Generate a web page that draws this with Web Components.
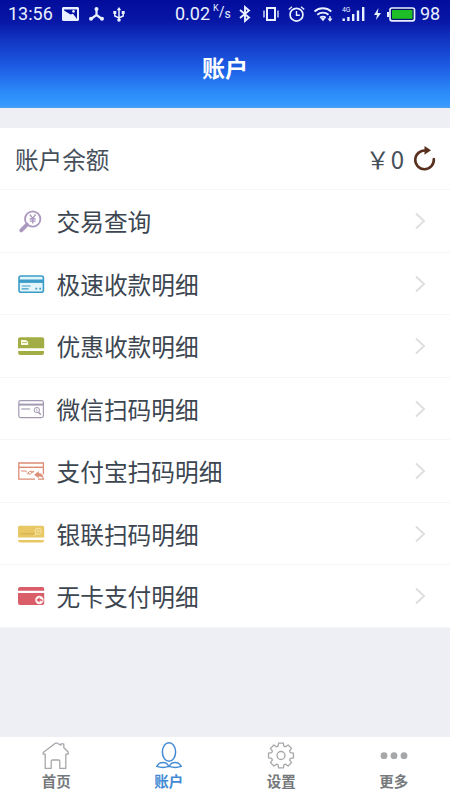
<!DOCTYPE html>
<html lang="zh-CN">
<head>
<meta charset="utf-8">
<title>账户</title>
<style>
html,body{margin:0;height:100%}
body{font-family:Roboto,"Noto Sans CJK SC",sans-serif;background:#edeff4;overflow:hidden}
</style>
</head>
<body>
<account-app></account-app>
<script>
const define = (name, html, setup) => {
  const t = document.createElement('template');
  t.innerHTML = html;
  customElements.define(name, class extends HTMLElement {
    connectedCallback() {
      if (this.shadowRoot) return;
      const root = this.attachShadow({mode: 'open'});
      root.append(t.content.cloneNode(true));
      if (setup) setup(this, root);
    }
  });
};

const icons = {
  search: ['#ab98be', `<circle cx="14.7" cy="10" r="7.7" fill="none" stroke="currentColor" stroke-width="1.8"/><path d="M9 15.6 3.2 21.4" stroke="currentColor" stroke-width="3.8" stroke-linecap="round"/><path d="m11.8 5.5 2.9 4 2.9-4M14.7 9.5v5M11.7 10h6M11.7 12.2h6" stroke="currentColor" stroke-width="1.3" fill="none"/>`],
  blue: ['#3b9cc8', `<rect x="1" y="4" width="24.4" height="16.2" rx="2" fill="#e3f5fb" stroke="currentColor" stroke-width="1.6"/><path d="M1 9.2h24.4" stroke="currentColor" stroke-width="3.4"/><path d="M3.6 14h9M3.6 16.8h7" stroke="currentColor" stroke-width="1.2"/><path d="M17.4 16.6h1.8M21.3 16.6h1.8" stroke="currentColor" stroke-width="1.6"/>`],
  green: ['#a3ad45', `<path d="M2 3.3h22.2a2 2 0 0 1 2 2v9H0v-9a2 2 0 0 1 2-2ZM.2 17h25.8v2a2 2 0 0 1-2 2H2.2a2 2 0 0 1-2-2Z" fill="currentColor"/><path d="M3 6h5l2.2 2v3H3Z" fill="#f8fae4"/><path d="M4 8.5h5" stroke="currentColor" stroke-width=".7"/>`],
  wechat: ['#a59ab3', `<rect x=".8" y="3.6" width="24.6" height="17" rx="1.8" fill="none" stroke="currentColor" stroke-width="1.2"/><path d="M1 7.6h24.4" stroke="currentColor" stroke-width="2"/><path d="M3.2 12h9" stroke="currentColor" stroke-width="1.1"/><circle cx="18.8" cy="13" r="2.7" fill="none" stroke="currentColor"/><path d="m20.5 15.2 2.3 2.5" stroke="currentColor" stroke-width="1.6"/><path d="M18.8 11.3v3.2" stroke="currentColor" stroke-width=".8"/>`],
  alipay: ['#dd8d75', `<path d="M17 20.2H.8V4h24.6v11.2M25.4 19v1.2H20" fill="none" stroke="currentColor" stroke-width="1.3"/><path d="M1 8.3h24.4" stroke="currentColor" stroke-width="1.5"/><path d="M3 12h5l1 1.5M9.5 14.8l2-2.5h3l-2 2.8zM14.5 14l1.5-2" fill="none" stroke="currentColor"/><path d="m16.2 15.7 4.5-3.4v2c3 0 4.8 1.8 4.8 5.6-1.2-2-2.4-2.5-4.8-2.4V19.2Z" fill="currentColor"/>`],
  yellow: ['#e7c864', `<path d="M2 3.8h22.4a1.8 1.8 0 0 1 1.8 1.8v10H0v-10a1.8 1.8 0 0 1 2-1.8ZM.2 18h25.8v.6a2 2 0 0 1-2 2H2.2a2 2 0 0 1-2-2Z" fill="currentColor"/><path d="M2.5 11.8h14" stroke="#d4ae4a"/><circle cx="20.2" cy="9.2" r="3.1" fill="none" stroke="#f8e7ac"/><path d="m18.5 11.5-2 2.3" stroke="#f8e7ac"/><path d="M20.2 7.5v3.2M18.8 9h2.8" stroke="#f8e7ac" stroke-width=".8"/>`],
  red: ['#d95e69', `<path d="M2 3.1h22.4a1.8 1.8 0 0 1 1.8 1.8v1.8H0V4.9a2 2 0 0 1 2-1.8ZM0 9.1h26.2v10a2 2 0 0 1-2 2H2a2 2 0 0 1-2-2Z" fill="currentColor"/><circle cx="21.4" cy="16" r="4.2" fill="#fff5f3"/><path d="m18.4 16 3.2-2.7v1.5c2 0 3 .8 3 3-.9-.9-1.6-1-3-.9v1.5Z" fill="currentColor"/>`]
};

define('status-bar', `<style>
:host{display:flex;align-items:center;height:28px;color:#e9f0ff;font-size:18px;line-height:28px;white-space:nowrap;box-sizing:border-box;padding-left:8px}
svg{display:block;flex:none;overflow:visible}
span{flex:none;display:block}
.time{width:45px;font-size:18px}
.rate{width:36px}.unit{width:17px;display:flex}
.unit sup{font-size:9px;line-height:21px;height:28px}.unit i{font-style:normal;font-size:14px}.unit b{font-weight:400;font-size:12px;line-height:32px}
</style>
<span class="time">13:56</span>
<svg style="margin-left:9px" width="17" height="14"><path fill-rule="evenodd" d="M1 0h15l1 1v12l-1 1H1l-1-1V1ZM2 3.5l6.5 4 2.5-.8 4 5.3V2.5H2Z" fill="currentColor"/><circle cx="11.5" cy="4.4" r="1.3" fill="currentColor"/><path d="m1.5 3 5 5.2L8.5 8l2 1.5 1 3.5h-10z" fill="currentColor"/></svg>
<svg style="margin-left:10px" width="15" height="14"><path d="M7.5 2v6L2 12m5.5-4 5.5 4" stroke="currentColor" stroke-width="2.2" fill="none"/><circle cx="7.5" cy="2" r="2" fill="currentColor"/><circle cx="2" cy="11.8" r="2" fill="currentColor"/><circle cx="13" cy="11.8" r="2" fill="currentColor"/></svg>
<svg style="margin-left:9px" width="12" height="15"><path d="M6 2v11M1.8 5.5V9L6 11l4.2-2V5.5" stroke="currentColor" stroke-width="1.5" fill="none"/><path d="m6 0 2.3 3.2H3.7ZM.3 4h3v3h-3zM8.7 4h3v3h-3z" fill="currentColor"/><circle cx="6" cy="13" r="1.8" fill="currentColor"/></svg>
<span class="rate" style="margin-left:50px">0.02</span>
<span class="unit" style="margin-left:2px"><sup>K</sup><i>/</i><b>s</b></span>
<svg style="margin-left:9px" width="12" height="16"><path d="m1 4 9 7.5L6 15V1l4 3.5L1 12" stroke="currentColor" stroke-width="1.9" fill="none"/></svg>
<svg style="margin-left:12px" width="16" height="14"><rect x="4" y="1" width="8" height="12" fill="none" stroke="currentColor" stroke-width="2"/><path d="M1 3.5v7M15 3.5v7" stroke="currentColor" stroke-width="1.3"/></svg>
<svg style="margin-left:9px" width="17" height="16"><circle cx="8.5" cy="8.7" r="6.4" fill="none" stroke="currentColor" stroke-width="1.7"/><path d="M8.5 5v4.2h3.3M.8 3.5 4 .8m9 0 3.2 2.7" stroke="currentColor" stroke-width="1.4" fill="none"/></svg>
<svg style="margin-left:9px" width="19" height="16"><path d="M.5 5.5a12.5 12.5 0 0 1 16.8 0M3.3 8.8a8.5 8.5 0 0 1 11.2 0M6 11.8a4.7 4.7 0 0 1 5.8 0" stroke="currentColor" stroke-width="1.8" fill="none"/><path d="m6.7 12.6 2.3 2.6 2.2-2.6a3.5 3.5 0 0 0-4.5 0M13.5 12.5h5L16 15.7ZM15.3 10h1.4v3h-1.4z" fill="currentColor"/></svg>
<svg style="margin-left:9px" width="24" height="16"><text x="0" y="6" font-size="6.8" font-weight="400" fill="currentColor">4G</text><path d="M1.7 12.5V15M6.4 11v4M11.2 8v7M16 4.5V15M21.2 1v14" stroke="currentColor" stroke-width="2.4"/></svg>
<svg style="margin-left:8px" width="7" height="12"><path d="M4.5 0 0 7h3l-1 5 5-7H3.7Z" fill="currentColor"/></svg>
<svg style="margin-left:6px" width="29" height="15"><rect x="3" y="1" width="24.5" height="12.8" rx="2" fill="#02106d" stroke="currentColor" stroke-width="1.7"/><path d="M0 5h2v5H0z" fill="currentColor"/><rect x="5" y="3" width="20.5" height="8.8" fill="#1ebf26"/></svg>
<span style="margin-left:4px">98</span>`);

define('app-header', `<style>
:host{display:flex;flex-direction:column;flex:none;height:107.5px;background:linear-gradient(#020c9b 0,#0817a6 20%,#1237c5 38%,#1d5ce4 62%,#2b88f7 84%,#3599ff 97%,#4d9df0 100%);color:#fff}
h1{margin:0;flex:1;font:700 23px/83px Roboto,"Noto Sans CJK SC",sans-serif;text-align:center}
</style><status-bar></status-bar><h1><slot></slot></h1>`);

define('balance-row', `<style>
:host{display:flex;align-items:center;height:62.5px;padding:1px 14px 0 15px;border-bottom:1px solid #f5f6f7;box-sizing:border-box;font-size:23.6px;color:#46505b}
.amount{margin-left:auto;display:flex;align-items:center}.amount span{font-size:24px}.yen{margin-right:1px}
.zero{font-family:"Noto Sans CJK SC",sans-serif;line-height:34px}
svg{margin-left:9px;display:block}
</style><span><slot></slot></span><div class="amount"><span class="yen">￥</span><span class="zero">0</span>
<svg width="23" height="26"><path d="M13.5 4.8A9.3 9.3 0 1 0 20.8 13" fill="none" stroke="#59301f" stroke-width="2.6" stroke-linecap="round"/><path d="m11.5 0 6.5 4.2-6.5 4.5Z" fill="#59301f"/></svg></div>`);

define('menu-row', `<style>
:host{display:flex;align-items:center;height:62.5px;padding:1px 24px 0 18px;border-bottom:1px solid #f5f6f7;box-sizing:border-box;font-size:23.7px;color:#3c4651}
svg{display:block;flex:none;overflow:visible}
span{margin-left:11.5px;flex:1}
</style><svg class="icon" width="27" height="24"></svg><span><slot></slot></span>
<svg width="12" height="18"><path d="m2 1.5 8 7.5-8 7.5" fill="none" stroke="#dfdfe1" stroke-width="2"/></svg>`, (host, root) => {
  const [color, body] = icons[host.getAttribute('icon')];
  const svg = root.querySelector('.icon');
  svg.style.color = color;
  svg.innerHTML = body;
});

define('tab-item', `<style>
:host{display:flex;flex-direction:column;align-items:center;flex:1;color:#76797b;font-size:14.5px;font-weight:700;line-height:22px;padding-top:5px}
:host([active]){color:#4389d3}
span{margin-top:1px}
::slotted(svg){display:block;overflow:visible}
</style><slot name="icon"></slot><span><slot></slot></span>`);

define('tab-bar', `<style>:host{display:flex;flex:none;height:63px;background:#fff;box-sizing:border-box}svg{color:#a5a7a9;fill:none;stroke:currentColor;stroke-width:1.3}[active] svg{color:#4389d3;stroke-width:1.5}</style>
<tab-item><svg slot="icon" width="28" height="29"><path d="M3.2 12.2v14.2h6v-7.2q0-1.2 1.2-1.2h6.2q1.2 0 1.2 1.2v7.2h6V12.2h2.4V10L21.8 5.7V1.8h-3v1.5L15.3 1.2h-2L1.2 10.5v1.7Z" stroke-linejoin="round"/></svg>首页</tab-item>
<tab-item active><svg slot="icon" width="28" height="29"><ellipse cx="14" cy="10" rx="6.6" ry="9.3"/><path d="M14.2 24.4c2-5.2 9.5-5.2 12 0q-6 2-12 0ZM13.8 24.4c-2-5.2-9.5-5.2-12 0q6 2 12 0Z"/></svg>账户</tab-item>
<tab-item><svg slot="icon" width="28" height="29"><circle cx="14" cy="13.5" r="4"/><path class="gear" stroke-linejoin="round"/></svg>设置</tab-item>
<tab-item><svg slot="icon" width="28" height="29"><g fill="currentColor" stroke="none"><circle cx="4" cy="13.7" r="3.4"/><circle cx="14" cy="13.7" r="3.4"/><circle cx="24" cy="13.7" r="3.4"/></g></svg>更多</tab-item>`, (host, root) => {
  // Eight teeth around the hub, four corners per tooth.
  const pts = [];
  for (let i = 0; i < 8; i++) {
    for (const [r, d] of [[9.8, -17], [12.7, -11], [12.7, 11], [9.8, 17]]) {
      const a = (i * 45 + d) * Math.PI / 180;
      pts.push((14 + r * Math.sin(a)).toFixed(2) + ' ' + (13.5 - r * Math.cos(a)).toFixed(2));
    }
  }
  root.querySelector('.gear').setAttribute('d', 'M' + pts.join('L') + 'Z');
});

define('account-app', `<style>
:host{display:flex;flex-direction:column;height:100vh;background:#edeff4}
main{flex:1;padding-top:20px}
section{background:#fff}
</style>
<app-header>账户</app-header>
<main><section>
<balance-row>账户余额</balance-row>
<menu-row icon="search">交易查询</menu-row>
<menu-row icon="blue">极速收款明细</menu-row>
<menu-row icon="green">优惠收款明细</menu-row>
<menu-row icon="wechat">微信扫码明细</menu-row>
<menu-row icon="alipay">支付宝扫码明细</menu-row>
<menu-row icon="yellow">银联扫码明细</menu-row>
<menu-row icon="red">无卡支付明细</menu-row>
</section></main>
<tab-bar></tab-bar>`);
</script>
</body>
</html>
